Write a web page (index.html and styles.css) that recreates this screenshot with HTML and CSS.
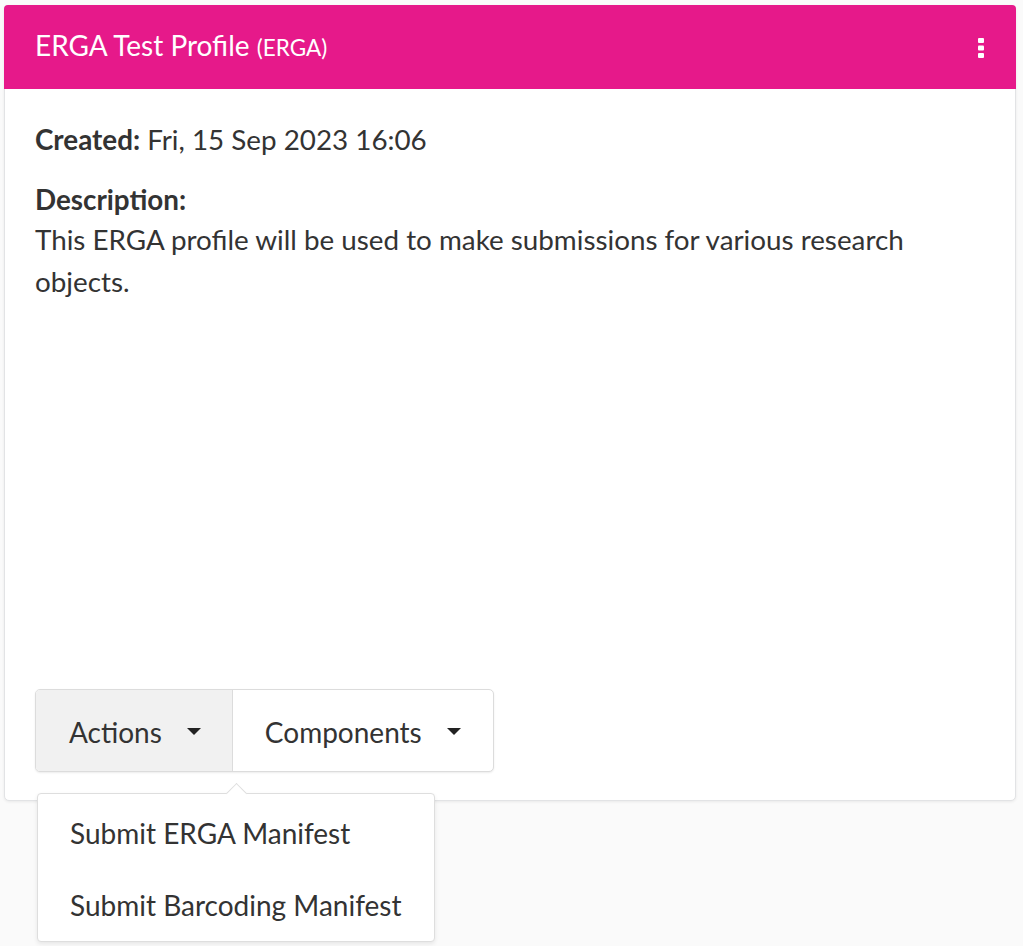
FILE: index.html
```html
<!DOCTYPE html>
<html>
<head>
<meta charset="utf-8">
<link rel="stylesheet" href="styles.css">
</head>
<body>
<div class="page">
  <div class="card">
    <div class="card-header">
      <div class="title">ERGA Test Profile <span class="sub">(ERGA)</span></div>
      <svg class="kebab" width="8" height="22" viewBox="0 0 8 22">
        <rect x="1" y="1" width="6" height="5" rx="1" fill="#fff"/>
        <rect x="1" y="8.5" width="6" height="5" rx="1" fill="#fff"/>
        <rect x="1" y="16" width="6" height="5" rx="1" fill="#fff"/>
      </svg>
    </div>
    <div class="card-body">
      <p class="created"><b>Created:</b> Fri, 15 Sep 2023 16:06</p>
      <p class="desc-label"><b>Description:</b></p>
      <p class="desc">This ERGA profile will be used to make submissions for various research objects.</p>
      <div class="btn-wrap">
        <div class="btn-group">
          <div class="btn active">Actions <span class="caret"></span></div>
          <div class="btn">Components <span class="caret"></span></div>
        </div>
        <div class="menu">
          <div class="item">Submit ERGA Manifest</div>
          <div class="item">Submit Barcoding Manifest</div>
        </div>
      </div>
    </div>
  </div>
</div>
</body>
</html>
```

FILE: styles.css
```css
html, body {
  margin: 0;
  padding: 0;
  background: #fafafa;
  font-family: Lato, "Open Sans", sans-serif;
  color: #333;
}
.page {
  padding: 5px 7px 0 4px;
  height: 941px;
}
.card {
  background: #fff;
  border: 1px solid #e2e3e5;
  border-radius: 5px;
  box-shadow: 0 1px 3px rgba(0,0,0,0.07);
  height: 794px;
  display: flex;
  flex-direction: column;
}
.card-header {
  background: #e6198a;
  height: 84px;
  border-radius: 4px 4px 0 0;
  margin: -1px -1px 0 -1px;
  display: flex;
  align-items: center;
  justify-content: space-between;
  padding: 0 31px 0 31px;
}
.title {
  color: #fff;
  font-size: 28px;
  line-height: 42px;
  margin-top: -1px;
}
.title .sub {
  font-size: 22.5px;
}
.kebab {
  display: block;
  margin-top: 1px;
}
.card-body {
  flex: 1;
  display: flex;
  flex-direction: column;
  padding: 30px 30px 28px 30px;
}
.card-body p {
  margin: 0;
  font-size: 27.8px;
  line-height: 42px;
}
.card-body b {
  font-weight: 700;
}
.desc-label {
  margin-top: 19px !important;
  line-height: 39px !important;
}
.btn-wrap {
  margin-top: auto;
  position: relative;
  align-self: flex-start;
}
.btn-group {
  display: flex;
  border: 1px solid #dcdcdc;
  border-radius: 5px;
  box-shadow: 0 1px 2px rgba(0,0,0,0.08);
  overflow: hidden;
  background: #fff;
}
.btn {
  height: 79px;
  display: flex;
  align-items: center;
  font-size: 28px;
  padding: 2px 31px 0 33px;
  color: #333;
}
.btn.active {
  background: #f1f1f1;
  border-right: 1px solid #dcdcdc;
}
.btn + .btn {
  padding-left: 32px;
  padding-right: 32px;
}
.caret {
  display: inline-block;
  width: 0;
  height: 0;
  border-left: 7px solid transparent;
  border-right: 7px solid transparent;
  border-top: 7px solid #222;
  margin-left: 25px;
  margin-top: -1px;
}
.menu {
  position: absolute;
  left: 2px;
  top: 104px;
  width: 396px;
  background: #fff;
  border: 1px solid #dedede;
  border-radius: 4px;
  box-shadow: 0 2px 4px rgba(0,0,0,0.08);
  padding: 3px 0 0 0;
  z-index: 5;
}
.menu::before {
  content: "";
  position: absolute;
  left: 191px;
  top: -8px;
  width: 14px;
  height: 14px;
  background: #fff;
  border-left: 1px solid #dedede;
  border-top: 1px solid #dedede;
  transform: rotate(45deg);
}
.item {
  position: relative;
  height: 72px;
  display: flex;
  align-items: center;
  padding-left: 32px;
  font-size: 28px;
  color: #333;
}
```
